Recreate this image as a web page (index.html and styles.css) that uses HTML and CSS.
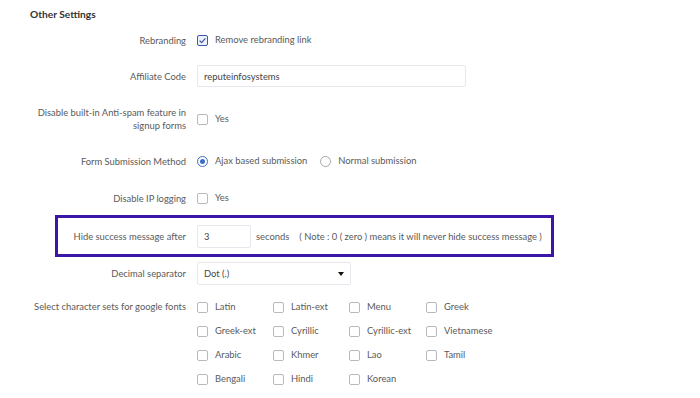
FILE: index.html
```html
<!DOCTYPE html>
<html>
<head>
<meta charset="utf-8">
<link rel="stylesheet" href="styles.css">
</head>
<body>
<div class="page">
  <h2 class="title">Other Settings</h2>

  <div class="row r-rebrand">
    <div class="label">Rebranding</div>
    <div class="ctrl">
      <label class="opt"><span class="cb checked"><svg viewBox="0 0 11 11" width="11" height="11"><path d="M2.6 5.6 L4.6 7.6 L8.4 3.4" fill="none" stroke="#3d5aa8" stroke-width="1.3"/></svg></span>Remove rebranding link</label>
    </div>
  </div>

  <div class="row r-aff">
    <div class="label">Affiliate Code</div>
    <div class="ctrl">
      <div class="input wide">reputeinfosystems</div>
    </div>
  </div>

  <div class="row r-spam">
    <div class="label">Disable built-in Anti-spam feature in<br>signup forms</div>
    <div class="ctrl">
      <label class="opt"><span class="cb"></span>Yes</label>
    </div>
  </div>

  <div class="row r-form">
    <div class="label">Form Submission Method</div>
    <div class="ctrl">
      <label class="opt"><span class="rb checked"></span>Ajax based submission</label>
      <label class="opt opt2"><span class="rb"></span>Normal submission</label>
    </div>
  </div>

  <div class="row r-ip">
    <div class="label">Disable IP logging</div>
    <div class="ctrl">
      <label class="opt"><span class="cb"></span>Yes</label>
    </div>
  </div>

  <div class="row r-hide highlight">
    <div class="label">Hide success message after</div>
    <div class="ctrl">
      <div class="input small">3</div>
      <span class="secs">seconds</span>
      <span class="note">( Note : 0 ( zero ) means it will never hide success message )</span>
    </div>
  </div>

  <div class="row r-dec">
    <div class="label">Decimal separator</div>
    <div class="ctrl">
      <div class="input select">Dot (.)<span class="caret"></span></div>
    </div>
  </div>

  <div class="row r-chars">
    <div class="label">Select character sets for google fonts</div>
    <div class="ctrl grid">
      <label class="opt"><span class="cb"></span>Latin</label>
      <label class="opt"><span class="cb"></span>Latin-ext</label>
      <label class="opt"><span class="cb"></span>Menu</label>
      <label class="opt"><span class="cb"></span>Greek</label>
      <label class="opt"><span class="cb"></span>Greek-ext</label>
      <label class="opt"><span class="cb"></span>Cyrillic</label>
      <label class="opt"><span class="cb"></span>Cyrillic-ext</label>
      <label class="opt"><span class="cb"></span>Vietnamese</label>
      <label class="opt"><span class="cb"></span>Arabic</label>
      <label class="opt"><span class="cb"></span>Khmer</label>
      <label class="opt"><span class="cb"></span>Lao</label>
      <label class="opt"><span class="cb"></span>Tamil</label>
      <label class="opt"><span class="cb"></span>Bengali</label>
      <label class="opt"><span class="cb"></span>Hindi</label>
      <label class="opt"><span class="cb"></span>Korean</label>
    </div>
  </div>
</div>
</body>
</html>
```

FILE: styles.css
```css
html, body {
  margin: 0;
  padding: 0;
  background: #ffffff;
}
body {
  font-family: Lato, "Noto Sans", sans-serif;
  font-size: 9.4px;
  color: #5a5a5a;
}
.page {
  width: 700px;
  height: 398px;
  padding: 0 0 0 30px;
  box-sizing: border-box;
  overflow: hidden;
}
.title {
  margin: 0;
  padding-top: 7px;
  height: 22px;
  box-sizing: border-box;
  font-size: 10.2px;
  font-weight: 700;
  color: #333;
  line-height: 14px;
}
.row {
  display: flex;
  align-items: center;
  white-space: nowrap;
}
.label {
  width: 156px;
  flex: none;
  text-align: right;
  line-height: 13px;
  color: #5a5a5a;
}
.ctrl {
  display: flex;
  align-items: center;
  margin-left: 11px;
  color: #5a5a5a;
  flex: none;
}
.r-rebrand { margin-top: 7px; height: 22px; }
.r-aff { margin-top: 14px; height: 22px; }
.r-spam { margin-top: 18px; height: 28px; }
.r-form { margin-top: 17px; height: 22px; }
.r-ip { margin-top: 15px; height: 22px; }
.r-hide { margin-top: 6px; height: 42px; }
.r-dec { margin-top: 5px; height: 23px; }
.r-chars { margin-top: 10px; align-items: flex-start; }
.r-chars .label { margin-top: 5px; }

.highlight {
  margin-left: 25px;
  width: 499px;
  border: 3px solid #3c16a6;
  box-sizing: border-box;
}
.highlight .label { width: 128px; }

.opt {
  display: inline-flex;
  align-items: center;
  line-height: 14px;
  color: #5a5a5a;
}
.opt2 { margin-left: 13px; }
.cb, .rb {
  width: 11px;
  height: 11px;
  box-sizing: border-box;
  border: 1px solid #b9b9bd;
  border-radius: 2px;
  margin-right: 7px;
  flex: none;
  display: inline-block;
  background: #fff;
}
.cb.checked {
  border-color: #3d5aa8;
  background: #eef1fa;
}
.cb svg { display: block; margin: -1px; }
.rb {
  border-radius: 50%;
  border-color: #a8a8ac;
  position: relative;
}
.rb.checked {
  border-color: #3d6fc6;
}
.rb.checked::after {
  content: "";
  position: absolute;
  left: 2px;
  top: 2px;
  width: 5px;
  height: 5px;
  border-radius: 50%;
  background: #3d6fc6;
}
.input {
  height: 22px;
  box-sizing: border-box;
  border: 1px solid #e7e7ed;
  border-radius: 2px;
  padding: 0 6px;
  display: flex;
  align-items: center;
  color: #444;
  background: #fff;
}
.wide { width: 269px; }
.small { width: 54px; height: 23px; }
.select {
  width: 154px;
  height: 23px;
  justify-content: space-between;
  padding-right: 6px;
}
.caret {
  width: 0;
  height: 0;
  border-left: 3.5px solid transparent;
  border-right: 3.5px solid transparent;
  border-top: 4px solid #111;
}
.secs { margin-left: 5px; }
.note { margin-left: 10px; }
.grid {
  display: grid;
  grid-template-columns: 76px 76px 77px 76px;
  grid-auto-rows: 24px;
  align-items: center;
}
.grid .opt { white-space: nowrap; }
```
